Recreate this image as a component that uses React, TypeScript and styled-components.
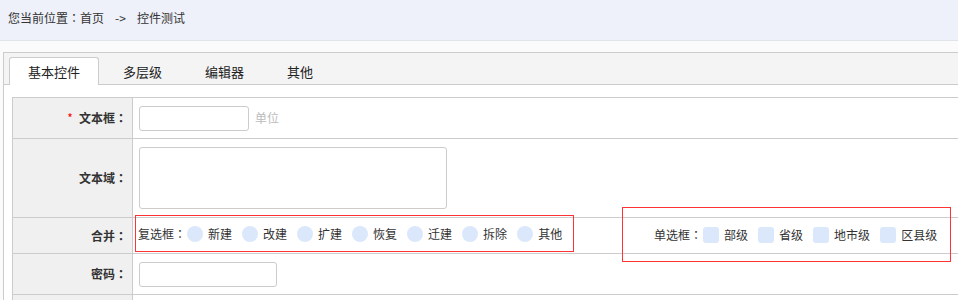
import React from 'react';
import styled, { createGlobalStyle } from 'styled-components';

const Global = createGlobalStyle`
  html, body { margin: 0; padding: 0; background: #fbfbfb; overflow: hidden; }
  body { font-family: "Noto Sans CJK SC", "Noto Sans", sans-serif; font-size: 12px; color: #333; }
  * { box-sizing: border-box; }
`;

const Header = styled.div`
  height: 41px;
  background: #eef1f9;
  border-bottom: 1px solid #e0e3ea;
  padding-left: 8px;
  line-height: 36px;
  white-space: nowrap;
  color: #333;
`;

const Arrow = styled.span`
  margin: 0 11px;
`;

const Colon = styled.span`
  font-family: "Noto Sans CJK TC", "Noto Sans CJK SC", sans-serif;
`;

const Main = styled.div`
  padding: 11px 0 0 3px;
`;

const Panel = styled.div`
  width: 1200px;
  border: 1px solid #ccc;
  border-right: none;
  background: #fff;
  height: 300px;
`;

const TabBar = styled.div`
  display: flex;
  align-items: flex-end;
  height: 32px;
  background: #f4f4f4;
  border-bottom: 1px solid #ccc;
  padding: 0 0 0 5px;
`;

const Tab = styled.div<{ $active?: boolean }>`
  height: 28px;
  margin-bottom: -1px;
  margin-right: 5px;
  padding: 0 18px;
  font-size: 13px;
  line-height: 27px;
  color: #222;
  border: 1px solid ${p => (p.$active ? '#ccc' : 'transparent')};
  border-bottom: none;
  border-radius: 3px 3px 0 0;
  background: ${p => (p.$active ? '#fff' : 'transparent')};
`;

const Body = styled.div`
  padding: 12px 0 0 8px;
`;

const Table = styled.table`
  border-collapse: collapse;
  width: 1180px;
`;

const Label = styled.td<{ $h: number }>`
  width: 120px;
  height: ${p => p.$h}px;
  background: #f0f0f0;
  border: 1px solid #ccc;
  text-align: right;
  padding: 0 5px 0 0;
  font-weight: bold;
  color: #333;
  line-height: 16px;
  vertical-align: middle;
`;

const Star = styled.span`
  color: #f00;
  font-weight: normal;
  margin-right: 6px;
`;

const Cell = styled.td<{ $flush?: boolean }>`
  border: 1px solid #ccc;
  padding: ${p => (p.$flush ? '0 0 0 2px' : '0 0 0 6px')};
  vertical-align: middle;
  line-height: 16px;
`;

const TextInput = styled.input<{ $w: number }>`
  display: inline-block;
  vertical-align: middle;
  width: ${p => p.$w}px;
  height: 25px;
  border: 1px solid #ccc;
  border-radius: 3px;
  background: #fff;
  outline: none;
`;

const Unit = styled.span`
  margin-left: 6px;
  color: #bbb;
  vertical-align: middle;
`;

const TextArea = styled.textarea`
  display: block;
  width: 308px;
  height: 62px;
  border: 1px solid #ccc;
  border-radius: 3px;
  resize: none;
  outline: none;
`;

const Line = styled.div`
  display: flex;
  align-items: flex-start;
  height: 35px;
`;

const Box = styled.div<{ $top: number; $h: number; $w?: number }>`
  display: flex;
  align-items: center;
  justify-content: ${p => (p.$w ? 'flex-end' : 'flex-start')};
  margin-top: ${p => p.$top}px;
  height: ${p => p.$h}px;
  width: ${p => (p.$w ? `${p.$w}px` : 'auto')};
  border: 1px solid #f33;
  padding: ${p => (p.$w ? '0 3px 0 0' : '0 1px 0 2px')};
  flex-shrink: 0;
`;

const RightBox = styled(Box)`
  margin-left: 48px;
`;

const GroupTitle = styled.span`
  margin-right: 1px;
  color: #333;
`;

const Option = styled.label`
  display: inline-flex;
  align-items: center;
  margin-right: 10px;
  color: #333;
`;

const Mark = styled.span<{ $round?: boolean }>`
  width: 16px;
  height: 16px;
  border-radius: ${p => (p.$round ? '50%' : '3px')};
  background: #dbe8fc;
  margin-right: 5px;
`;

const checks = ['新建', '改建', '扩建', '恢复', '迁建', '拆除', '其他'];
const radios = ['部级', '省级', '地市级', '区县级'];

export default function App() {
  return (
    <>
      <Global />
      <Header>
        您当前位置<Colon>：</Colon>首页<Arrow>-&gt;</Arrow>控件测试
      </Header>
      <Main>
        <Panel>
          <TabBar>
            <Tab $active>基本控件</Tab>
            <Tab>多层级</Tab>
            <Tab>编辑器</Tab>
            <Tab>其他</Tab>
          </TabBar>
          <Body>
            <Table>
              <tbody>
                <tr>
                  <Label $h={41}>
                    <Star>*</Star>文本框<Colon>：</Colon>
                  </Label>
                  <Cell>
                    <TextInput $w={110} type="text" />
                    <Unit>单位</Unit>
                  </Cell>
                </tr>
                <tr>
                  <Label $h={79}>
                    文本域<Colon>：</Colon>
                  </Label>
                  <Cell>
                    <TextArea />
                  </Cell>
                </tr>
                <tr>
                  <Label $h={36}>
                    合并<Colon>：</Colon>
                  </Label>
                  <Cell $flush>
                    <Line>
                      <Box $top={-3} $h={37}>
                        <GroupTitle>
                          复选框<Colon>：</Colon>
                        </GroupTitle>
                        {checks.map(c => (
                          <Option key={c}>
                            <Mark $round />
                            {c}
                          </Option>
                        ))}
                      </Box>
                      <RightBox $top={-11} $h={55} $w={329}>
                        <GroupTitle>
                          单选框<Colon>：</Colon>
                        </GroupTitle>
                        {radios.map(r => (
                          <Option key={r}>
                            <Mark />
                            {r}
                          </Option>
                        ))}
                      </RightBox>
                    </Line>
                  </Cell>
                </tr>
                <tr>
                  <Label $h={41}>
                    密码<Colon>：</Colon>
                  </Label>
                  <Cell>
                    <TextInput $w={138} type="password" />
                  </Cell>
                </tr>
                <tr>
                  <Label $h={41}></Label>
                  <Cell></Cell>
                </tr>
              </tbody>
            </Table>
          </Body>
        </Panel>
      </Main>
    </>
  );
}
